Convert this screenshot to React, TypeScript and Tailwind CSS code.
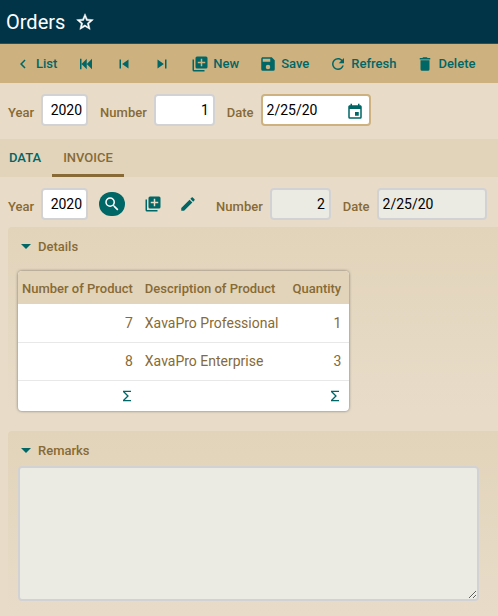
import { useState, type ReactNode } from "react";

const ICONS = {
  star: "M12,15.39L8.24,17.66L9.23,13.38L5.91,10.5L10.29,10.13L12,6.09L13.71,10.13L18.09,10.5L14.77,13.38L15.76,17.66M22,9.24L14.81,8.63L12,2L9.19,8.63L2,9.24L7.45,13.97L5.82,21L12,17.27L18.18,21L16.54,13.97L22,9.24Z",
  chevronLeft: "M15.41,16.58L10.83,12L15.41,7.41L14,6L8,12L14,18L15.41,16.58Z",
  first: "M20,5V19L13,12M6,5V19H4V5M13,5V19L6,12",
  previous: "M6,18V6H8V18H6M9.5,12L18,6V18L9.5,12Z",
  next: "M16,18H18V6H16M6,18L14.5,12L6,6V18Z",
  libraryPlus: "M19,11H15V15H13V11H9V9H13V5H15V9H19M20,2H8A2,2 0 0,0 6,4V16A2,2 0 0,0 8,18H20A2,2 0 0,0 22,16V4A2,2 0 0,0 20,2M4,6H2V20A2,2 0 0,0 4,22H18V20H4V6Z",
  save: "M15,9H5V5H15M12,19A3,3 0 0,1 9,16A3,3 0 0,1 12,13A3,3 0 0,1 15,16A3,3 0 0,1 12,19M17,3H5C3.89,3 3,3.9 3,5V19A2,2 0 0,0 5,21H19A2,2 0 0,0 21,19V7L17,3Z",
  refresh: "M17.65,6.35C16.2,4.9 14.21,4 12,4A8,8 0 0,0 4,12A8,8 0 0,0 12,20C15.73,20 18.84,17.45 19.73,14H17.65C16.83,16.33 14.61,18 12,18A6,6 0 0,1 6,12A6,6 0 0,1 12,6C13.66,6 15.14,6.69 16.22,7.78L13,11H20V4L17.65,6.35Z",
  trash: "M19,4H15.5L14.5,3H9.5L8.5,4H5V6H19M6,19A2,2 0 0,0 8,21H16A2,2 0 0,0 18,19V7H6V19Z",
  magnify: "M9.5,3A6.5,6.5 0 0,1 16,9.5C16,11.11 15.41,12.59 14.44,13.73L14.71,14H15.5L20.5,19L19,20.5L14,15.5V14.71L13.73,14.44C12.59,15.41 11.11,16 9.5,16A6.5,6.5 0 0,1 3,9.5A6.5,6.5 0 0,1 9.5,3M9.5,5C7,5 5,7 5,9.5C5,12 7,14 9.5,14C12,14 14,12 14,9.5C14,7 12,5 9.5,5Z",
  pencil: "M20.71,7.04C21.1,6.65 21.1,6 20.71,5.63L18.37,3.29C18,2.9 17.35,2.9 16.96,3.29L15.12,5.12L18.87,8.87M3,17.25V21H6.75L17.81,9.93L14.06,6.18L3,17.25Z",
  calendar: "M19,19H5V8H19M16,1V3H8V1H6V3H5C3.89,3 3,3.89 3,5V19A2,2 0 0,0 5,21H19A2,2 0 0,0 21,19V5C21,3.89 20.1,3 19,3H18V1M17,12H12V17H17V12Z",
  menuDown: "M7,9L12,14L17,9H7Z",
  sigma: "M18,6H8.83L14.83,12L8.83,18H18V20H6V18L12,12L6,6V4H18V6Z",
};

type IconName = keyof typeof ICONS;

function Icon({ name, className = "size-[18px]" }: { name: IconName; className?: string }) {
  return (
    <svg viewBox="0 0 24 24" fill="currentColor" aria-hidden="true" className={`shrink-0 ${className}`}>
      <path d={ICONS[name]} />
    </svg>
  );
}

const ACTIONS: { icon: IconName; label: string; iconOnly?: boolean }[] = [
  { icon: "chevronLeft", label: "List" },
  { icon: "first", label: "First", iconOnly: true },
  { icon: "previous", label: "Previous", iconOnly: true },
  { icon: "next", label: "Next", iconOnly: true },
  { icon: "libraryPlus", label: "New" },
  { icon: "save", label: "Save" },
  { icon: "refresh", label: "Refresh" },
  { icon: "trash", label: "Delete" },
];

const FIELD = "h-8 rounded border-2 text-sm text-black outline-none";
const EDITABLE = "border-[#d2d2d4] bg-white";
const LOCKED = "border-[#d2d2d4] bg-[#ebebe3]";

function Label({ htmlFor, children }: { htmlFor: string; children: ReactNode }) {
  return (
    <label htmlFor={htmlFor} className="mr-[7px] pt-[6px] text-[13px] font-medium">
      {children}
    </label>
  );
}

function Frame({ title, className, children }: { title: string; className: string; children: ReactNode }) {
  const [open, setOpen] = useState(true);
  return (
    <section className={`ml-2 rounded-l-sm bg-linear-to-b from-[#e2d4ba] to-[#e8dcc9] pl-[10px] ${className}`}>
      <h2>
        <button
          type="button"
          aria-expanded={open}
          onClick={() => setOpen(!open)}
          className="flex items-center pt-2 pb-[3px] text-[13px] font-medium"
        >
          <Icon name="menuDown" className="-ml-1 size-6 text-[#006666]" />
          <span>{title}</span>
        </button>
      </h2>
      {open && children}
    </section>
  );
}

const LINES = [
  { number: 7, description: "XavaPro Professional", quantity: 1 },
  { number: 8, description: "XavaPro Enterprise", quantity: 3 },
];

function SumButton({ label }: { label: string }) {
  return (
    <button type="button" aria-label={label} className="ml-auto block text-[#006666]">
      <Icon name="sigma" className="size-4" />
    </button>
  );
}

export default function App() {
  return (
    <div className="min-h-screen bg-[#e8dcc9] font-['Roboto',sans-serif] text-[#876a36]">
      <header className="flex h-11 items-center gap-[10px] border-b border-[#2c4f55] bg-[#023448] px-[6px] text-white">
        <h1 className="text-xl">Orders</h1>
        <button type="button" aria-label="Add to favorites">
          <Icon name="star" className="size-5 stroke-white stroke-[0.6]" />
        </button>
      </header>

      <nav className="flex min-h-[39px] flex-wrap items-center gap-x-5 bg-[#cdb280] px-[14px] text-[13px] font-medium text-[#006666]">
        {ACTIONS.map(({ icon, label, iconOnly }) => (
          <button key={label} type="button" aria-label={label} className="flex items-center gap-1">
            <Icon name={icon} />
            {!iconOnly && <span>{label}</span>}
          </button>
        ))}
      </nav>

      <main>
        <div className="flex flex-wrap items-center gap-x-3 px-2 pt-[11px] pb-[13px]">
          <div className="flex items-center">
            <Label htmlFor="year">Year</Label>
            <input id="year" defaultValue="2020" className={`${FIELD} ${EDITABLE} w-[47px] px-1 text-right`} />
          </div>
          <div className="flex items-center">
            <Label htmlFor="number">Number</Label>
            <input id="number" defaultValue="1" className={`${FIELD} ${EDITABLE} w-[61px] px-1 text-right`} />
          </div>
          <div className="flex items-center">
            <Label htmlFor="date">Date</Label>
            <div className={`${FIELD} flex w-[110px] items-center justify-between border-[#cdb280] bg-white pr-[5px] pl-1`}>
              <input id="date" defaultValue="2/25/20" className="w-16 outline-none" />
              <button type="button" aria-label="Open calendar" className="pt-[3px] text-[#006666]">
                <Icon name="calendar" />
              </button>
            </div>
          </div>
        </div>

        <div role="tablist" className="flex h-[38px] bg-[#e2d4ba] text-[13px] font-medium">
          <button type="button" role="tab" aria-selected={false} className="pr-[11px] pl-[9px] text-[#006666]">
            DATA
          </button>
          <button type="button" role="tab" aria-selected={true} className="border-b-3 border-[#876a36] px-[11px] pt-[3px]">
            INVOICE
          </button>
        </div>

        <div className="flex flex-wrap items-center pt-[11px] pr-1 pb-[7px] pl-2">
          <Label htmlFor="invoice-year">Year</Label>
          <input id="invoice-year" defaultValue="2020" className={`${FIELD} ${EDITABLE} w-[47px] px-1 text-right`} />
          <div className="mx-[11px] flex items-center text-[#006666]">
            <button
              type="button"
              aria-label="Search invoice"
              className="flex h-6 w-[26px] items-center justify-center rounded-full bg-[#006666] text-white"
            >
              <Icon name="magnify" />
            </button>
            <button type="button" aria-label="New invoice" className="ml-[19px]">
              <Icon name="libraryPlus" />
            </button>
            <button type="button" aria-label="Edit invoice" className="mr-2 ml-[17px]">
              <Icon name="pencil" />
            </button>
          </div>
          <Label htmlFor="invoice-number">Number</Label>
          <input id="invoice-number" readOnly value="2" className={`${FIELD} ${LOCKED} mr-3 w-[61px] px-1 text-right`} />
          <Label htmlFor="invoice-date">Date</Label>
          <input id="invoice-date" readOnly value="2/25/20" className={`${FIELD} ${LOCKED} w-[110px] px-1`} />
        </div>

        <Frame title="Details" className="mb-5">
          <div className="mt-[9px] w-fit overflow-hidden rounded-sm bg-white shadow-[0_0_3px_#00000080]">
            <table className="text-sm">
              <thead className="bg-[#e2d4ba] text-[13px]">
                <tr className="h-[33px]">
                  <th className="pt-[3px] pr-3 pl-1 text-right font-medium">Number of Product</th>
                  <th className="pt-[3px] pr-[14px] text-left font-medium">Description of Product</th>
                  <th className="pt-[3px] pr-2 text-right font-medium">Quantity</th>
                </tr>
              </thead>
              <tbody>
                {LINES.map((line) => (
                  <tr key={line.number} className="h-[38px] border-b border-[#e8e8e8]">
                    <td className="pr-3 text-right">{line.number}</td>
                    <td className="pr-[14px]">{line.description}</td>
                    <td className="pr-2 text-right">{line.quantity}</td>
                  </tr>
                ))}
              </tbody>
              <tfoot>
                <tr className="h-[31px]">
                  <td className="pr-[10px]">
                    <SumButton label="Sum number of product" />
                  </td>
                  <td />
                  <td className="pr-[6px]">
                    <SumButton label="Sum quantity" />
                  </td>
                </tr>
              </tfoot>
            </table>
          </div>
        </Frame>

        <Frame title="Remarks" className="pr-[19px] pb-3">
          <textarea
            readOnly
            aria-label="Remarks"
            className={`block h-[135px] w-full rounded border-2 p-1 text-sm outline-none ${LOCKED}`}
          />
        </Frame>
      </main>
    </div>
  );
}
